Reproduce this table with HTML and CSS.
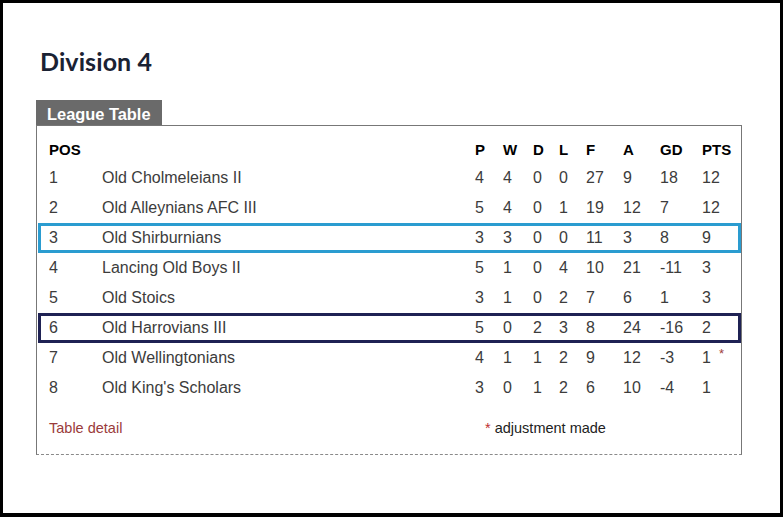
FILE: index.html
```html
<!DOCTYPE html>
<html lang="en">
<head>
<meta charset="utf-8">
<title>Division 4</title>
<link rel="stylesheet" href="styles.css">
</head>
<body>
<div class="frame">
  <h1 class="title">Division 4</h1>
  <div class="tab">League Table</div>
  <div class="box">
    <div class="row head">
      <span>POS</span><span></span><span>P</span><span>W</span><span>D</span><span>L</span><span>F</span><span>A</span><span>GD</span><span>PTS</span>
    </div>
    <div class="row"><span>1</span><span>Old Cholmeleians II</span><span>4</span><span>4</span><span>0</span><span>0</span><span>27</span><span>9</span><span>18</span><span>12</span></div>
    <div class="row"><span>2</span><span>Old Alleynians AFC III</span><span>5</span><span>4</span><span>0</span><span>1</span><span>19</span><span>12</span><span>7</span><span>12</span></div>
    <div class="row hl hl-blue"><span>3</span><span>Old Shirburnians</span><span>3</span><span>3</span><span>0</span><span>0</span><span>11</span><span>3</span><span>8</span><span>9</span></div>
    <div class="row"><span>4</span><span>Lancing Old Boys II</span><span>5</span><span>1</span><span>0</span><span>4</span><span>10</span><span>21</span><span>-11</span><span>3</span></div>
    <div class="row"><span>5</span><span>Old Stoics</span><span>3</span><span>1</span><span>0</span><span>2</span><span>7</span><span>6</span><span>1</span><span>3</span></div>
    <div class="row hl hl-navy"><span>6</span><span>Old Harrovians III</span><span>5</span><span>0</span><span>2</span><span>3</span><span>8</span><span>24</span><span>-16</span><span>2</span></div>
    <div class="row"><span>7</span><span>Old Wellingtonians</span><span>4</span><span>1</span><span>1</span><span>2</span><span>9</span><span>12</span><span>-3</span><span>1<span class="adj">*</span></span></div>
    <div class="row"><span>8</span><span>Old King's Scholars</span><span>3</span><span>0</span><span>1</span><span>2</span><span>6</span><span>10</span><span>-4</span><span>1</span></div>
    <div class="foot">
      <a class="detail" href="#">Table detail</a>
      <span class="note"><span class="star">*</span> adjustment made</span>
    </div>
  </div>
</div>
</body>
</html>
```
FILE: styles.css
```css
* { box-sizing: border-box; }
html, body { margin: 0; padding: 0; background: #fff; }
.frame {
  width: 783px;
  height: 517px;
  border: 3px solid #000;
  border-bottom-width: 4px;
  padding: 43px 38px 0 33px;
  font-family: "Liberation Sans", Arial, sans-serif;
}
.title {
  margin: 0 0 24px 4px;
  font-family: Lato, "Open Sans", sans-serif;
  font-weight: 700;
  font-size: 25px;
  line-height: 30px;
  height: 30px;
  color: #1a2233;
  letter-spacing: 0.1px;
}
.tab {
  display: inline-block;
  vertical-align: top;
  height: 25px;
  padding: 3px 11px 0 11px;
  line-height: 22px;
  background: #6a6a6a;
  color: #fff;
  font-weight: 700;
  font-size: 16.4px;
}
.box {
  width: 706px;
  border: 1px solid #777;
  border-bottom: 1px dashed #8a8a8a;
  padding: 11px 0 16px 0;
}
.row {
  display: grid;
  grid-template-columns: 53px 373px 28px 30px 26px 27px 37px 37px 42px 1fr;
  height: 30px;
  line-height: 30px;
  padding-left: 12px;
  font-size: 16px;
  color: #3c3c3c;
  white-space: nowrap;
}
.row.head {
  height: 26px;
  line-height: 25px;
  font-size: 15px;
  font-weight: 700;
  color: #000;
}
.row.hl {
  margin-left: 1px;
  border-width: 3px;
  border-style: solid;
  padding-left: 8px;
  line-height: 24px;
}
.row.hl-blue { border-color: #2a9cd0; }
.row.hl-navy { border-color: #1f2254; }
.adj {
  color: #a04040;
  font-size: 13px;
  margin-left: 8px;
  vertical-align: top;
  line-height: 22px;
}
.foot {
  display: flex;
  margin-top: 15px;
  padding-left: 12px;
  height: 20px;
  line-height: 20px;
  font-size: 14.5px;
}
.detail {
  width: 436px;
  color: #9a3b3b;
  text-decoration: none;
}
.note { color: #222; }
.star { color: #c03030; }
```
